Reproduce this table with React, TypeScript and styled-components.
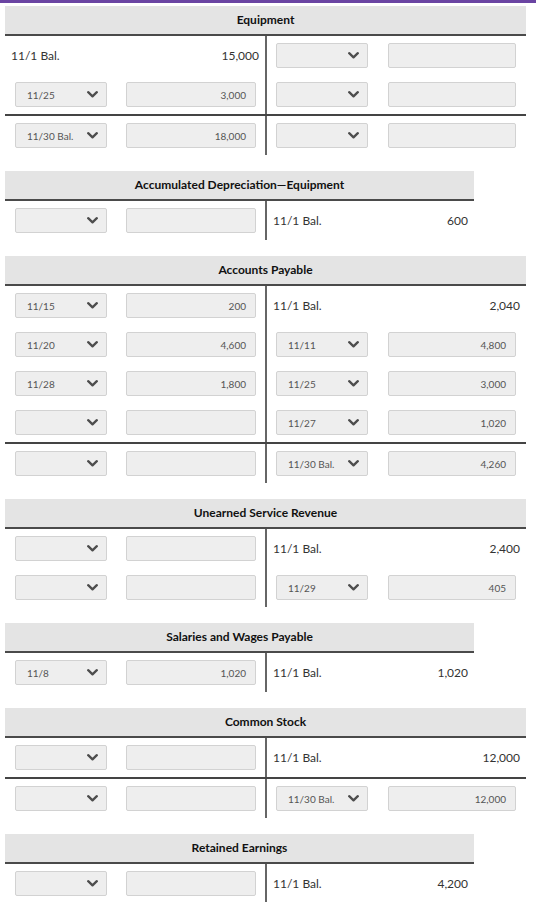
import React from "react";
import styled, { createGlobalStyle } from "styled-components";

const GlobalStyle = createGlobalStyle`
  html, body { margin: 0; padding: 0; background: #ffffff; }
  body { font-family: Lato, "Open Sans", "Liberation Sans", sans-serif; color: #333; }
  * { box-sizing: border-box; }
`;

type Cell =
  | { kind: "select"; value?: string }
  | { kind: "input"; value?: string }
  | { kind: "label"; text: string }
  | { kind: "amount"; text: string };

type Row = { cells: [Cell, Cell, Cell, Cell]; total?: boolean };

type Account = { title: string; cols: string; rows: Row[] };

const S = (value?: string): Cell => ({ kind: "select", value });
const I = (value?: string): Cell => ({ kind: "input", value });
const L = (text: string): Cell => ({ kind: "label", text });
const A = (text: string): Cell => ({ kind: "amount", text });

const WIDE = "111px 149px 114px 147px";
const NARROW = "111px 149px 93px 116px";

const accounts: Account[] = [
  {
    title: "Equipment",
    cols: WIDE,
    rows: [
      { cells: [L("11/1 Bal."), A("15,000"), S(), I()] },
      { cells: [S("11/25"), I("3,000"), S(), I()] },
      { cells: [S("11/30 Bal."), I("18,000"), S(), I()], total: true },
    ],
  },
  {
    title: "Accumulated Depreciation\u2014Equipment",
    cols: NARROW,
    rows: [{ cells: [S(), I(), L("11/1 Bal."), A("600")] }],
  },
  {
    title: "Accounts Payable",
    cols: WIDE,
    rows: [
      { cells: [S("11/15"), I("200"), L("11/1 Bal."), A("2,040")] },
      { cells: [S("11/20"), I("4,600"), S("11/11"), I("4,800")] },
      { cells: [S("11/28"), I("1,800"), S("11/25"), I("3,000")] },
      { cells: [S(), I(), S("11/27"), I("1,020")] },
      { cells: [S(), I(), S("11/30 Bal."), I("4,260")], total: true },
    ],
  },
  {
    title: "Unearned Service Revenue",
    cols: WIDE,
    rows: [
      { cells: [S(), I(), L("11/1 Bal."), A("2,400")] },
      { cells: [S(), I(), S("11/29"), I("405")] },
    ],
  },
  {
    title: "Salaries and Wages Payable",
    cols: NARROW,
    rows: [{ cells: [S("11/8"), I("1,020"), L("11/1 Bal."), A("1,020")] }],
  },
  {
    title: "Common Stock",
    cols: WIDE,
    rows: [
      { cells: [S(), I(), L("11/1 Bal."), A("12,000")] },
      { cells: [S(), I(), S("11/30 Bal."), I("12,000")], total: true },
    ],
  },
  {
    title: "Retained Earnings",
    cols: NARROW,
    rows: [{ cells: [S(), I(), L("11/1 Bal."), A("4,200")] }],
  },
];

const TopBar = styled.div`
  height: 3px;
  background: #6a44a2;
`;

const Page = styled.div`
  padding: 3px 0 0 5px;
`;

const TAccount = styled.div`
  display: flex;
  flex-direction: column;
  width: fit-content;
  margin-bottom: 16px;
`;

const Header = styled.div`
  height: 30px;
  background: #e4e4e4;
  border-bottom: 2px solid #4a4a4a;
  display: flex;
  align-items: center;
  justify-content: center;
  font-size: 12px;
  font-weight: 700;
  color: #111;
  padding-bottom: 1px;
`;

const RowGrid = styled.div<{ $cols: string; $total?: boolean }>`
  display: grid;
  grid-template-columns: ${(p) => p.$cols};
  height: ${(p) => (p.$total ? 41 : 39)}px;
  border-top: ${(p) => (p.$total ? "2px solid #444" : "none")};
`;

const paddings = ["0 9px 0 10px", "0 9px 0 10px", "0 11px 0 9px", "0 10px 0 9px"];

const CellBox = styled.div<{ $index: number; $text: boolean }>`
  display: flex;
  align-items: center;
  min-width: 0;
  padding: ${(p) => (p.$text ? "0 6px" : paddings[p.$index])};
  border-left: ${(p) => (p.$index === 2 ? "2px solid #666" : "none")};
  justify-content: ${(p) => (p.$text && (p.$index === 1 || p.$index === 3) ? "flex-end" : "flex-start")};
`;

const PlainText = styled.span`
  font-size: 12px;
  color: #333;
  white-space: nowrap;
`;

const SelectBox = styled.div`
  flex: 1;
  height: 25px;
  background: #eeeeee;
  border: 1px solid #d2d2d2;
  border-radius: 2px;
  display: flex;
  align-items: center;
  justify-content: space-between;
  padding: 0 8px 0 11px;
  font-size: 10px;
  color: #555;
  white-space: nowrap;
`;

const InputBox = styled.div`
  flex: 1;
  height: 25px;
  background: #eeeeee;
  border: 1px solid #d2d2d2;
  border-radius: 2px;
  display: flex;
  align-items: center;
  justify-content: flex-end;
  padding: 0 9px 0 8px;
  font-size: 10px;
  color: #555;
  white-space: nowrap;
`;

const Chevron = () => (
  <svg width="11" height="7" viewBox="0 0 11 7" aria-hidden="true">
    <path d="M1.2 1.2 L5.5 5.3 L9.8 1.2" fill="none" stroke="#4d4d4d" strokeWidth="2.3" strokeLinecap="round" strokeLinejoin="round" />
  </svg>
);

const renderCell = (cell: Cell, index: number) => {
  const isText = cell.kind === "label" || cell.kind === "amount";
  return (
    <CellBox key={index} $index={index} $text={isText}>
      {cell.kind === "label" && <PlainText>{cell.text}</PlainText>}
      {cell.kind === "amount" && <PlainText>{cell.text}</PlainText>}
      {cell.kind === "select" && (
        <SelectBox>
          <span>{cell.value ?? ""}</span>
          <Chevron />
        </SelectBox>
      )}
      {cell.kind === "input" && <InputBox>{cell.value ?? ""}</InputBox>}
    </CellBox>
  );
};

export default function App() {
  return (
    <>
      <GlobalStyle />
      <TopBar />
      <Page>
        {accounts.map((acc) => (
          <TAccount key={acc.title}>
            <Header>{acc.title}</Header>
            {acc.rows.map((row, ri) => (
              <RowGrid key={ri} $cols={acc.cols} $total={row.total}>
                {row.cells.map((c, ci) => renderCell(c, ci))}
              </RowGrid>
            ))}
          </TAccount>
        ))}
      </Page>
    </>
  );
}
